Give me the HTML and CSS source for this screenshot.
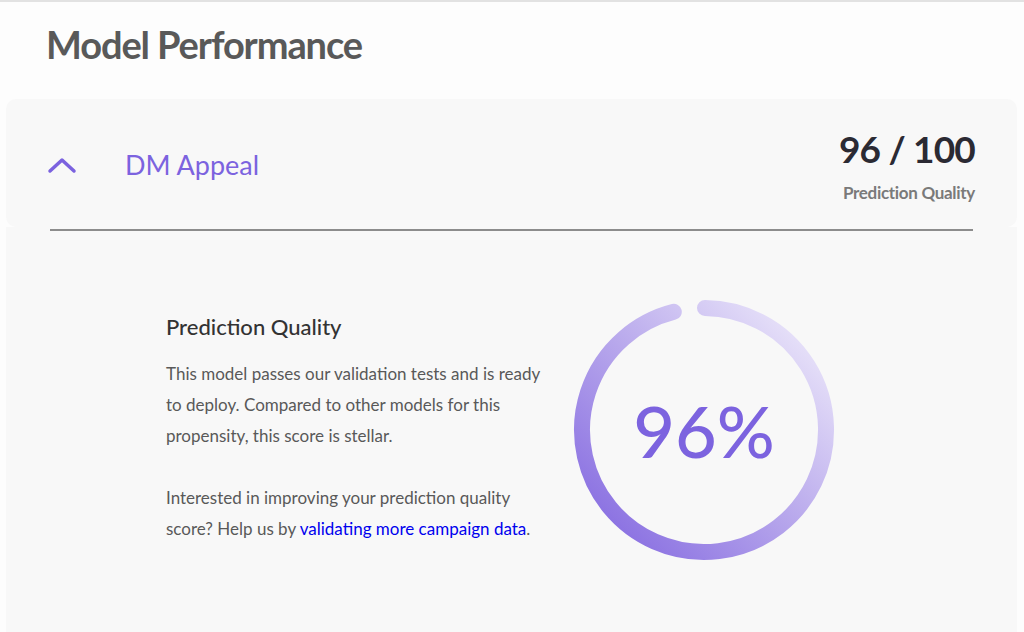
FILE: index.html
```html
<!DOCTYPE html>
<html>
<head>
<meta charset="utf-8">
<link rel="stylesheet" href="styles.css">
</head>
<body>
<div class="page">
  <h1 class="title">Model Performance</h1>
  <div class="card">
    <div class="card-head">
      <div class="head-left">
        <svg class="chevron" width="30" height="18" viewBox="0 0 30 18"><path d="M3 15 L15 4 L27 15" fill="none" stroke="#7b62df" stroke-width="3.5" stroke-linecap="round" stroke-linejoin="round"/></svg>
        <span class="model-name">DM Appeal</span>
      </div>
      <div class="head-right">
        <div class="score">96 / 100</div>
        <div class="score-label">Prediction Quality</div>
      </div>
    </div>
    <div class="card-body">
      <div class="divider"></div>
      <div class="content">
        <div class="text">
          <h2 class="sub">Prediction Quality</h2>
          <p class="para">This model passes our validation tests and is ready to deploy. Compared to other models for this propensity, this score is stellar.</p>
          <p class="para">Interested in improving your prediction quality score? Help us by <a class="link" href="#">validating more campaign data</a>.</p>
        </div>
        <div class="ring">
          <svg width="264" height="264" viewBox="0 0 264 264">
            <defs>
              <linearGradient id="g" x1="0" y1="1" x2="1" y2="0">
                <stop offset="0" stop-color="#7f63df"/>
                <stop offset="0.5" stop-color="#b8a8ec"/>
                <stop offset="1" stop-color="#f3f0fc"/>
              </linearGradient>
            </defs>
            <path d="M133 10 A122 122 0 1 1 101.8 13.8" fill="none" stroke="url(#g)" stroke-width="16" stroke-linecap="round"/>
          </svg>
          <div class="pct">96%</div>
        </div>
      </div>
    </div>
  </div>
</div>
</body>
</html>
```
FILE: styles.css
```css
html, body {
  margin: 0;
  padding: 0;
  background: #fdfdfd;
  font-family: Lato, "Open Sans", sans-serif;
}
.page {
  border-top: 2px solid #e2e2e2;
  height: 630px;
  overflow: hidden;
}
.title {
  margin: 0;
  padding: 19px 0 0 46px;
  height: 97px;
  box-sizing: border-box;
  font-size: 38px;
  letter-spacing: -1.1px;
  font-weight: 700;
  color: #595959;
}
.card {
  margin: 0 7px 0 6px;
}
.card-head {
  background: #f8f8f8;
  border-radius: 10px;
  height: 128px;
  display: flex;
  justify-content: space-between;
  align-items: flex-start;
  padding: 0 42px 0 41px;
}
.head-left {
  display: flex;
  align-items: center;
  margin-top: 49px;
}
.chevron {
  display: block;
}
.model-name {
  margin-left: 48px;
  font-size: 27px;
  color: #7c63df;
}
.head-right {
  text-align: right;
  margin-top: 27px;
}
.score {
  font-size: 37px;
  font-weight: 700;
  color: #2b2a33;
  line-height: 46px;
  letter-spacing: -0.8px;
}
.score-label {
  font-size: 17px;
  font-weight: 700;
  color: #7a7a7a;
  margin-top: 10px;
  letter-spacing: -0.3px;
}
.card-body {
  background: #f8f8f8;
  height: 420px;
  padding: 2px 44px 0 44px;
}
.divider {
  height: 2px;
  background: #8c8c8c;
}
.content {
  display: flex;
  align-items: flex-start;
  padding-left: 116px;
  padding-top: 67px;
}
.text {
  width: 380px;
}
.sub {
  margin: 15px 0 18px;
  font-size: 22px;
  font-weight: 500;
  color: #333;
}
.para {
  margin: 0 0 31px;
  font-size: 17px;
  line-height: 31px;
  color: #595959;
}
.link {
  color: #0000ee;
  text-decoration: none;
}
.ring {
  position: relative;
  width: 264px;
  height: 264px;
  margin-left: 26px;
}
.ring svg {
  display: block;
}
.pct {
  position: absolute;
  inset: 0;
  display: flex;
  align-items: center;
  justify-content: center;
  font-size: 72px;
  font-weight: 500;
  color: #7c63df;
}
```
